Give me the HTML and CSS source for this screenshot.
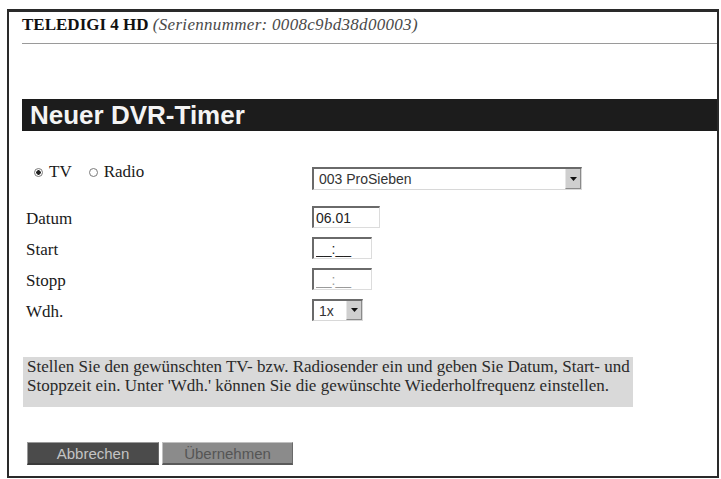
FILE: index.html
```html
<!DOCTYPE html>
<html lang="de">
<head>
<meta charset="utf-8">
<title>Neuer DVR-Timer</title>
<link rel="stylesheet" href="styles.css">
</head>
<body>
<div class="frame">
  <div class="header"><span class="device">TELEDIGI 4 HD</span> <span class="serial">(Seriennummer: 0008c9bd38d00003)</span></div>
  <h1 class="title">Neuer DVR-Timer</h1>
  <form class="form">
    <div class="row row-first">
      <div class="label radios">
        <label class="radio"><input type="radio" name="mode" checked><span>TV</span></label>
        <label class="radio"><input type="radio" name="mode"><span>Radio</span></label>
      </div>
      <div class="select select-channel"><span class="select-value">003 ProSieben</span><span class="select-arrow"><svg width="7" height="4" viewBox="0 0 7 4"><path d="M0 0H7L3.5 4Z" fill="#111"/></svg></span></div>
    </div>
    <div class="row">
      <div class="label">Datum</div>
      <input class="field field-date" type="text" value="06.01">
    </div>
    <div class="row">
      <div class="label">Start</div>
      <input class="field field-time" type="text" value="__:__">
    </div>
    <div class="row">
      <div class="label">Stopp</div>
      <input class="field field-time field-faint" type="text" value="__:__">
    </div>
    <div class="row">
      <div class="label">Wdh.</div>
      <div class="select select-repeat"><span class="select-value">1x</span><span class="select-arrow"><svg width="7" height="4" viewBox="0 0 7 4"><path d="M0 0H7L3.5 4Z" fill="#111"/></svg></span></div>
    </div>
  </form>
  <div class="info">Stellen Sie den gewünschten TV- bzw. Radiosender ein und geben Sie Datum, Start- und<br>Stoppzeit ein. Unter 'Wdh.' können Sie die gewünschte Wiederholfrequenz einstellen.</div>
  <div class="buttons">
    <button class="btn btn-cancel" type="button">Abbrechen</button>
    <button class="btn btn-apply" type="button">Übernehmen</button>
  </div>
</div>
</body>
</html>
```
FILE: styles.css
```css
html, body {
  margin: 0;
  padding: 0;
  background: #ffffff;
}

body {
  font-family: "Liberation Serif", "Times New Roman", serif;
  font-size: 17px;
  color: #1a1a1a;
}

.frame {
  box-sizing: border-box;
  width: 712px;
  height: 469px;
  margin: 9px 0 0 7px;
  border: 2px solid #2a2a2a;
  border-top-width: 3px;
  background: #fff;
}

.header {
  margin-left: 13px;
  padding-top: 3px;
  padding-bottom: 8px;
  line-height: 20px;
  border-bottom: 1px solid #9a9a9a;
  white-space: nowrap;
}

.device {
  font-weight: bold;
  color: #111;
}

.serial {
  font-style: italic;
  letter-spacing: 0.3px;
  color: #4a4a4a;
}

.title {
  margin: 55px 0 0 13px;
  height: 32px;
  padding-left: 8px;
  background: #1c1c1c;
  color: #f4f4f4;
  font-family: "Liberation Sans", Arial, sans-serif;
  font-size: 26px;
  font-weight: bold;
  line-height: 32px;
}

.form {
  margin: 36px 0 0 17px;
}

.row {
  display: flex;
  align-items: center;
  height: 22px;
  margin-top: 9px;
}

.row-first {
  align-items: flex-start;
  height: 23px;
  margin-top: 0;
  margin-bottom: 16px;
}

.label {
  width: 286px;
  flex: none;
  padding-top: 4px;
  line-height: 16px;
}

.radios {
  display: flex;
  align-items: center;
  gap: 17px;
  margin-top: -7px;
  padding-left: 8px;
  width: 278px;
}

.radio {
  display: flex;
  align-items: center;
  gap: 6px;
}

.radio input {
  appearance: none;
  -webkit-appearance: none;
  box-sizing: border-box;
  width: 9px;
  height: 9px;
  margin: 0;
  border: 1px solid #7a7a7a;
  border-radius: 50%;
  background: #fff;
}

.radio input:checked {
  background: radial-gradient(circle, #222 0 2px, #fff 2.5px);
}

.select {
  box-sizing: border-box;
  display: flex;
  align-items: center;
  height: 23px;
  border-style: solid;
  border-width: 2px 1px 1px 2px;
  border-color: #6a6a6a #d8d8d8 #d8d8d8 #6a6a6a;
  font-family: "Liberation Sans", Arial, sans-serif;
  font-size: 14px;
  color: #333;
  background: #fff;
}

.select-channel {
  width: 270px;
}

.select-repeat {
  width: 51px;
  height: 22px;
}

.select-value {
  flex: 1;
  padding-left: 5px;
}

.select-arrow {
  box-sizing: border-box;
  width: 16px;
  height: 100%;
  display: flex;
  align-items: center;
  justify-content: center;
  background: #cfcfcf;
  border-left: 1px solid #e6e6e6;
  border-right: 1px solid #8a8a8a;
  border-bottom: 1px solid #8a8a8a;
}

.field {
  box-sizing: border-box;
  height: 22px;
  margin: 0;
  padding: 0 2px;
  border-style: solid;
  border-width: 2px 1px 1px 2px;
  border-color: #6a6a6a #dcdcdc #dcdcdc #6a6a6a;
  font-family: "Liberation Sans", Arial, sans-serif;
  font-size: 14px;
  color: #222;
  background: #fff;
  outline: none;
}

.field-date {
  width: 68px;
}

.field-time {
  width: 60px;
}

.field-faint {
  color: #9a9a9a;
}

.info {
  box-sizing: border-box;
  width: 610px;
  height: 50px;
  margin: 36px 0 0 14px;
  padding: 0 4px;
  background: #d9d9d9;
  line-height: 19px;
  white-space: nowrap;
  color: #2a2a2a;
}

.buttons {
  display: flex;
  gap: 3px;
  margin: 35px 0 0 18px;
}

.btn {
  box-sizing: border-box;
  height: 23px;
  margin: 0;
  padding: 0;
  border-style: solid;
  border-width: 1px 1px 2px 1px;
  font-family: "Liberation Sans", Arial, sans-serif;
  font-size: 15px;
  cursor: pointer;
}

.btn-cancel {
  width: 132px;
  background: #4b4b4b;
  color: #c4c4c4;
  border-color: #9a9a9a #6a6a6a #3a3a3a #9a9a9a;
}

.btn-apply {
  width: 131px;
  background: #8b8b8b;
  color: #555555;
  border-color: #c0c0c0 #6a6a6a #5a5a5a #c0c0c0;
}
```
